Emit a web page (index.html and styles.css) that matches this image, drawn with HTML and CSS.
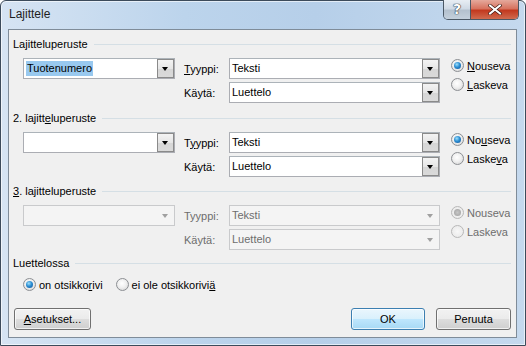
FILE: index.html
```html
<!DOCTYPE html>
<html lang="fi">
<head>
    <meta charset="UTF-8">
    <title>Lajittele</title>
    <link rel="stylesheet" href="styles.css">
</head>
<body>
    <div class="window">
        <div class="titlebar">
            <span class="title">Lajittele</span>
            <div class="caption-buttons">
                <div class="cap-help">?</div>
                <div class="cap-close">
                    <svg width="14" height="11" viewBox="0 0 14 11">
                        <path d="M2 1.5 L12 9.5 M12 1.5 L2 9.5" stroke="#3a1710" stroke-width="3.4" stroke-linecap="square"/>
                        <path d="M2 1.5 L12 9.5 M12 1.5 L2 9.5" stroke="#fff" stroke-width="2" stroke-linecap="square"/>
                    </svg>
                </div>
            </div>
        </div>

        <div class="client">
            <!-- 1 -->
            <div class="group g1">
                <div class="group-head"><span>La<u>j</u>itteluperuste</span></div>
                <div class="group-body">
                    <div class="combo main"><span class="value"><span class="selected">Tuotenumero</span></span><span class="drop"></span></div>
                    <div class="fields">
                        <label><u>T</u>yyppi:</label>
                        <div class="combo"><span class="value">Teksti</span><span class="drop"></span></div>
                        <label>Käytä:</label>
                        <div class="combo"><span class="value">Luettelo</span><span class="drop"></span></div>
                    </div>
                    <div class="radios">
                        <div class="opt"><span class="radio on"></span><span><u>N</u>ouseva</span></div>
                        <div class="opt"><span class="radio"></span><span><u>L</u>askeva</span></div>
                    </div>
                </div>
            </div>

            <!-- 2 -->
            <div class="group g2">
                <div class="group-head"><span>2. lajitt<u>e</u>luperuste</span></div>
                <div class="group-body">
                    <div class="combo main"><span class="value"></span><span class="drop"></span></div>
                    <div class="fields">
                        <label>T<u>y</u>yppi:</label>
                        <div class="combo"><span class="value">Teksti</span><span class="drop"></span></div>
                        <label>Käytä:</label>
                        <div class="combo"><span class="value">Luettelo</span><span class="drop"></span></div>
                    </div>
                    <div class="radios">
                        <div class="opt"><span class="radio on"></span><span>No<u>u</u>seva</span></div>
                        <div class="opt"><span class="radio"></span><span>Laske<u>v</u>a</span></div>
                    </div>
                </div>
            </div>

            <!-- 3 (disabled) -->
            <div class="group g3 disabled">
                <div class="group-head"><span><u>3</u>. lajitteluperuste</span></div>
                <div class="group-body">
                    <div class="combo main"><span class="value"></span><span class="drop"></span></div>
                    <div class="fields">
                        <label>Tyyppi:</label>
                        <div class="combo"><span class="value">Teksti</span><span class="drop"></span></div>
                        <label>Käytä:</label>
                        <div class="combo"><span class="value">Luettelo</span><span class="drop"></span></div>
                    </div>
                    <div class="radios">
                        <div class="opt"><span class="radio on"></span><span>Nouseva</span></div>
                        <div class="opt"><span class="radio"></span><span>Laskeva</span></div>
                    </div>
                </div>
            </div>

            <div class="group list-group">
                <div class="group-head"><span>Luettelossa</span></div>
                <div class="list-options">
                    <div class="opt"><span class="radio on"></span><span>on otsikko<u>r</u>ivi</span></div>
                    <div class="opt"><span class="radio"></span><span>ei ole otsikkorivi<u>ä</u></span></div>
                </div>
            </div>

            <div class="footer">
                <button class="btn"><u>A</u>setukset...</button>
                <div class="spacer"></div>
                <button class="btn default">OK</button>
                <button class="btn">Peruuta</button>
            </div>
        </div>
    </div>
</body>
</html>
```

FILE: styles.css
```css
* {
    box-sizing: border-box;
}

body {
    margin: 0;
    background: #fff;
    font-family: "Liberation Sans", Arial, sans-serif;
    font-size: 11px;
    color: #000;
}

u {
    text-decoration: underline;
    text-underline-offset: 1px;
}

.window {
    width: 526px;
    height: 346px;
    border: 1px solid #3c4b5b;
    border-radius: 6px 6px 0 0;
    background: linear-gradient(90deg, #d6e4f3 0%, #bcd4ec 35%, #b6cfe9 60%, #c5d9ee 100%);
    padding: 0 8px 7px 7px;
    display: flex;
    flex-direction: column;
    box-shadow: inset 0 0 0 1px rgba(255, 255, 255, 0.6);
}

.titlebar {
    height: 28px;
    display: flex;
    align-items: flex-start;
    position: relative;
}

.title {
    margin-top: 6px;
    margin-left: 1px;
    font-size: 12px;
    color: #1e1e1e;
}

.caption-buttons {
    position: absolute;
    top: -1px;
    right: -2px;
    display: flex;
    height: 20px;
    border: 1px solid #4b5865;
    border-top: none;
    border-radius: 0 0 5px 5px;
    overflow: hidden;
}

.cap-help {
    width: 27px;
    height: 19px;
    background: linear-gradient(#e8eef4 0%, #d0dae5 45%, #b4c1ce 55%, #c4d0dc 100%);
    border-right: 1px solid #4b5865;
    color: #fff;
    font-family: "DejaVu Sans", sans-serif;
    font-weight: bold;
    font-size: 14px;
    line-height: 19px;
    text-align: center;
    text-shadow: 0 0 1px #2a3440, 0 0 1px #2a3440, 0 0 1px #2a3440;
}

.cap-close {
    width: 47px;
    height: 19px;
    background: linear-gradient(#e5a99c 0%, #d7735f 45%, #c2391f 55%, #d06b4f 100%);
    display: flex;
    align-items: center;
    justify-content: center;
}

.client {
    flex: 1;
    background: #f0f0f0;
    border: 1px solid #7f8c99;
    padding: 7px 4px 0 4px;
    display: flex;
    flex-direction: column;
}

.group {
    height: 74px;
    flex: none;
}

.g2 {
    height: 73px;
}

.g3 {
    height: 72px;
}

.group-head {
    display: flex;
    align-items: center;
    height: 15px;
    line-height: 15px;
}

.group-head::after {
    content: "";
    flex: 1;
    height: 1px;
    background: #d5dfe5;
    margin-left: 6px;
    margin-right: 1px;
}

.group-body {
    display: flex;
    align-items: flex-start;
    padding-top: 6px;
    padding-left: 10px;
}

.combo {
    position: relative;
    height: 21px;
    border: 1px solid #abadb3;
    border-top-color: #acb3b9;
    background: #fff;
    display: flex;
    align-items: center;
    flex: none;
}

.combo .value {
    flex: 1;
    padding-left: 2px;
    line-height: 15px;
    display: flex;
}

.combo .selected {
    background: #99c9ef;
    padding: 0 1px;
}

.combo .drop {
    width: 17px;
    height: 19px;
    margin-left: auto;
    border: 1px solid #8a8a8a;
    background: linear-gradient(#f3f3f3 0%, #e6e6e6 50%, #d6d6d6 51%, #dadada 100%);
    position: relative;
    flex: none;
}

.combo .drop::after {
    content: "";
    position: absolute;
    left: 4px;
    top: 7px;
    border-left: 3.5px solid transparent;
    border-right: 3.5px solid transparent;
    border-top: 4px solid #000;
}

.combo.main {
    width: 152px;
}

.fields {
    display: grid;
    grid-template-columns: 45px 211px;
    row-gap: 3px;
    margin-left: 9px;
    align-items: center;
    flex: none;
}

.radios {
    display: flex;
    flex-direction: column;
    gap: 4px;
    margin-left: 11px;
}

.opt {
    display: flex;
    align-items: center;
    height: 15px;
    gap: 3px;
    white-space: nowrap;
}

.radio {
    width: 13px;
    height: 13px;
    border-radius: 50%;
    border: 1px solid #8c8f93;
    background: radial-gradient(circle at 45% 40%, #ffffff 0%, #f0f0f0 45%, #cfcfcf 100%);
    position: relative;
    flex: none;
}

.radio.on::after {
    content: "";
    position: absolute;
    left: 2px;
    top: 2px;
    width: 7px;
    height: 7px;
    border-radius: 50%;
    background: radial-gradient(circle at 40% 35%, #9fe0fb 0%, #2d8fd3 45%, #0d4f96 100%);
}

/* disabled group */
.disabled .group-body {
    color: #6d6d6d;
}

.disabled .combo {
    border-color: #c9cacc;
    background: #f4f4f4;
}

.disabled .combo .drop {
    border-color: transparent;
    background: transparent;
}

.disabled .combo .drop::after {
    border-top-color: #a0a0a0;
}

.disabled .radio {
    border-color: #b8b8b8;
    background: radial-gradient(circle, #f8f8f8 0%, #e6e6e6 100%);
}

.disabled .radio.on::after {
    background: radial-gradient(circle, #c6c6c6 0%, #9e9e9e 100%);
}

.list-group {
    height: 52px;
}

.list-options {
    display: flex;
    gap: 13px;
    padding-top: 6px;
    padding-left: 10px;
}

.footer {
    display: flex;
    align-items: center;
    padding: 0 1px;
}

.spacer {
    flex: 1;
}

.btn {
    font: inherit;
    color: #000;
    height: 22px;
    padding: 0;
    border: 1px solid #707070;
    border-radius: 3px;
    background: linear-gradient(#f2f2f2 0%, #ebebeb 50%, #dddddd 51%, #cfcfcf 100%);
    box-shadow: inset 0 0 0 1px rgba(255, 255, 255, 0.7);
    width: 77px;
}

.btn.default {
    width: 74px;
    border-color: #3c7fb1;
    background: linear-gradient(#eaf6fd 0%, #d9f0fc 50%, #bee6fd 51%, #a7d9f5 100%);
    margin-right: 11px;
}

.footer .btn:last-child {
    width: 75px;
}
```
